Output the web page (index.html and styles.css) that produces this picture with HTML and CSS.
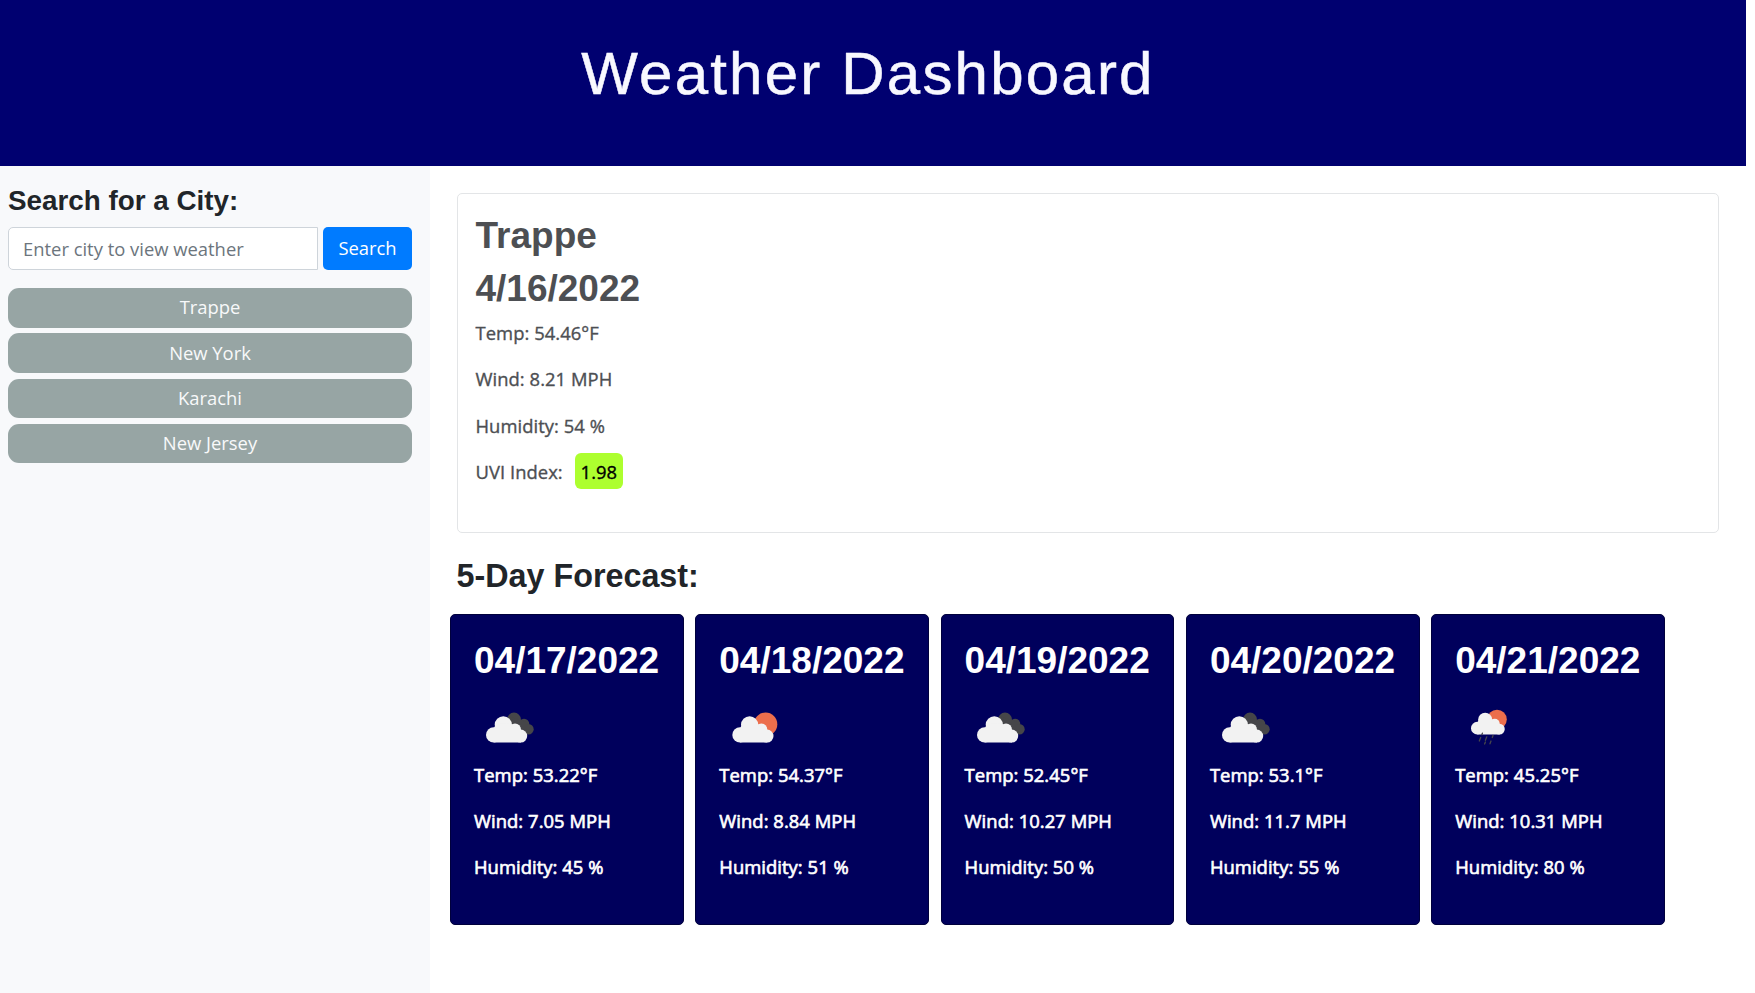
FILE: index.html
```html
<!DOCTYPE html>
<html lang="en">
<head>
<meta charset="utf-8">
<title>Weather Dashboard</title>
<link rel="stylesheet" href="styles.css">
</head>
<body>
<svg class="defs" width="0" height="0">
  <defs>
    <g id="cloud"><circle cx="7.7" cy="18.7" r="7.7"/><circle cx="17.3" cy="8.6" r="8.6"/><circle cx="29" cy="13.3" r="6"/><circle cx="34.7" cy="19.9" r="6.5"/><path d="M7.7 12 L10 8 L24 7 L29 10 L35 15 V26.4 H7.7Z"/></g>
    <g id="clouds"><g fill="#464649"><circle cx="40" cy="16.6" r="7"/><circle cx="50" cy="21" r="5.3"/><circle cx="54.4" cy="26.3" r="5.3"/><path d="M38 14 L52 19 V31 H40Z"/></g><use href="#cloud" x="12" y="13.2" fill="#f2f2f2"/></g>
    <g id="sun-cloud"><circle cx="46.6" cy="21.2" r="11.7" fill="#ec6e4c"/><use href="#cloud" x="13.3" y="13.2" fill="#f2f2f2"/></g>
    <g id="sun-rain"><circle cx="42" cy="16.5" r="9.8" fill="#ec6e4c"/><use href="#cloud" transform="translate(16 9.8) scale(.82)" fill="#f2f2f2"/><path d="M27.4 30.2l-.6 1.5M25.7 34.5l-1.4 3.5M31.8 33.8l-1.4 3.5M38 32.5l-.7 2M30.4 39l-.8 2M36 38l-1 2.8" stroke="#46464b" stroke-width="1.3" stroke-linecap="round"/></g>
  </defs>
</svg>
<header class="hero"><h1>Weather Dashboard</h1></header>
<main class="layout">
  <aside class="sidebar">
    <h4>Search for a City:</h4>
    <div class="search"><input type="text" placeholder="Enter city to view weather"><button class="go">Search</button></div>
    <div class="history"><button>Trappe</button><button>New York</button><button>Karachi</button><button>New Jersey</button></div>
  </aside>
  <section class="content">
    <article class="current">
      <h2>Trappe</h2>
      <h2>4/16/2022</h2>
      <p>Temp: 54.46°F</p>
      <p>Wind: 8.21 MPH</p>
      <p>Humidity: 54 %</p>
      <p>UVI Index: <span class="uvi">1.98</span></p>
    </article>
    <h3>5-Day Forecast:</h3>
    <div class="forecast">
      <article class="day"><h2>04/17/2022</h2><svg class="icon" viewBox="0 0 70 46"><use href="#clouds"/></svg><p>Temp: 53.22°F</p><p>Wind: 7.05 MPH</p><p>Humidity: 45 %</p></article>
      <article class="day"><h2>04/18/2022</h2><svg class="icon" viewBox="0 0 70 46"><use href="#sun-cloud"/></svg><p>Temp: 54.37°F</p><p>Wind: 8.84 MPH</p><p>Humidity: 51 %</p></article>
      <article class="day"><h2>04/19/2022</h2><svg class="icon" viewBox="0 0 70 46"><use href="#clouds"/></svg><p>Temp: 52.45°F</p><p>Wind: 10.27 MPH</p><p>Humidity: 50 %</p></article>
      <article class="day"><h2>04/20/2022</h2><svg class="icon" viewBox="0 0 70 46"><use href="#clouds"/></svg><p>Temp: 53.1°F</p><p>Wind: 11.7 MPH</p><p>Humidity: 55 %</p></article>
      <article class="day"><h2>04/21/2022</h2><svg class="icon" viewBox="0 0 70 46"><use href="#sun-rain"/></svg><p>Temp: 45.25°F</p><p>Wind: 10.31 MPH</p><p>Humidity: 80 %</p></article>
    </div>
  </section>
</main>
</body>
</html>
```
FILE: styles.css
```css
* { box-sizing: border-box; margin: 0; padding: 0; }
body { height: 993px; display: flex; flex-direction: column; overflow: hidden; background: #fff; color: #212529; font: 18.4px/27px "Open Sans", sans-serif; }
h1, h2, h3, h4 { font-family: "Liberation Sans", Arial, sans-serif; white-space: nowrap; }
.defs { position: absolute; }
.hero { width: 1746px; height: 165.5px; flex: none; background: #000070; padding: 39px 10px 0 0; text-align: center; }
.hero h1 { color: #f8f8ff; font-size: 60px; line-height: 70px; font-weight: 400; letter-spacing: 2.2px; -webkit-text-stroke: .5px currentColor; }
.layout { flex: 1; display: flex; }
.sidebar { width: 430px; background: #f8f9fb; padding: 18.5px 18px 0 8px; }
.sidebar h4 { font-size: 27.8px; line-height: 33px; margin-bottom: 9.5px; }
.search { display: flex; gap: 5px; height: 43.5px; margin-bottom: 18.3px; }
.search input { flex: 1; min-width: 0; border: 1px solid #ced4da; border-radius: 5px 0 0 5px; padding: 0 14px; font: inherit; background: #fff; }
.search input::placeholder { color: #6c757d; opacity: 1; }
.go { width: 89px; border: 0; border-radius: 5px; background: #007bff; color: #fff; font: inherit; padding-bottom: 2px; }
.history { display: flex; flex-direction: column; gap: 5.8px; }
.history button { height: 39.4px; border: 0; border-radius: 11px; background: #97a5a4; color: #f8f9fa; font: inherit; padding-bottom: 2px; }
.content { padding: 27.5px 0 0 20px; }
.current { width: 1262px; height: 340px; margin-left: 6.5px; border: 1px solid #e3e5e7; border-radius: 5px; padding: 20px 18px; color: #4d4f53; }
.current h2 { font-size: 37px; line-height: 44px; margin-bottom: 9.2px; }
.current h2 + h2 { margin-bottom: 8px; }
p { line-height: 27px; margin-bottom: 19.25px; letter-spacing: .05px; white-space: nowrap; -webkit-text-stroke: .35px currentColor; }
.uvi { display: inline-block; margin: -5px 0 -5px 7px; padding: 4.5px 6px; border-radius: 6px; background: #adff2f; color: #000; }
h3 { font-size: 32.3px; line-height: 38px; margin: 24px 0 19px 6.5px; }
.forecast { display: flex; gap: 11.5px; }
.day { width: 233.8px; height: 310.5px; border: 1px solid #00003c; border-radius: 5px; background: #00005c; color: #fff; padding: 24px 23px 23px; }
.day h2 { font-size: 37px; line-height: 44px; }
.day p { -webkit-text-stroke-width: .65px; }
.icon { display: block; width: 70px; height: 46px; margin: 19.5px 0 12px; }
```
